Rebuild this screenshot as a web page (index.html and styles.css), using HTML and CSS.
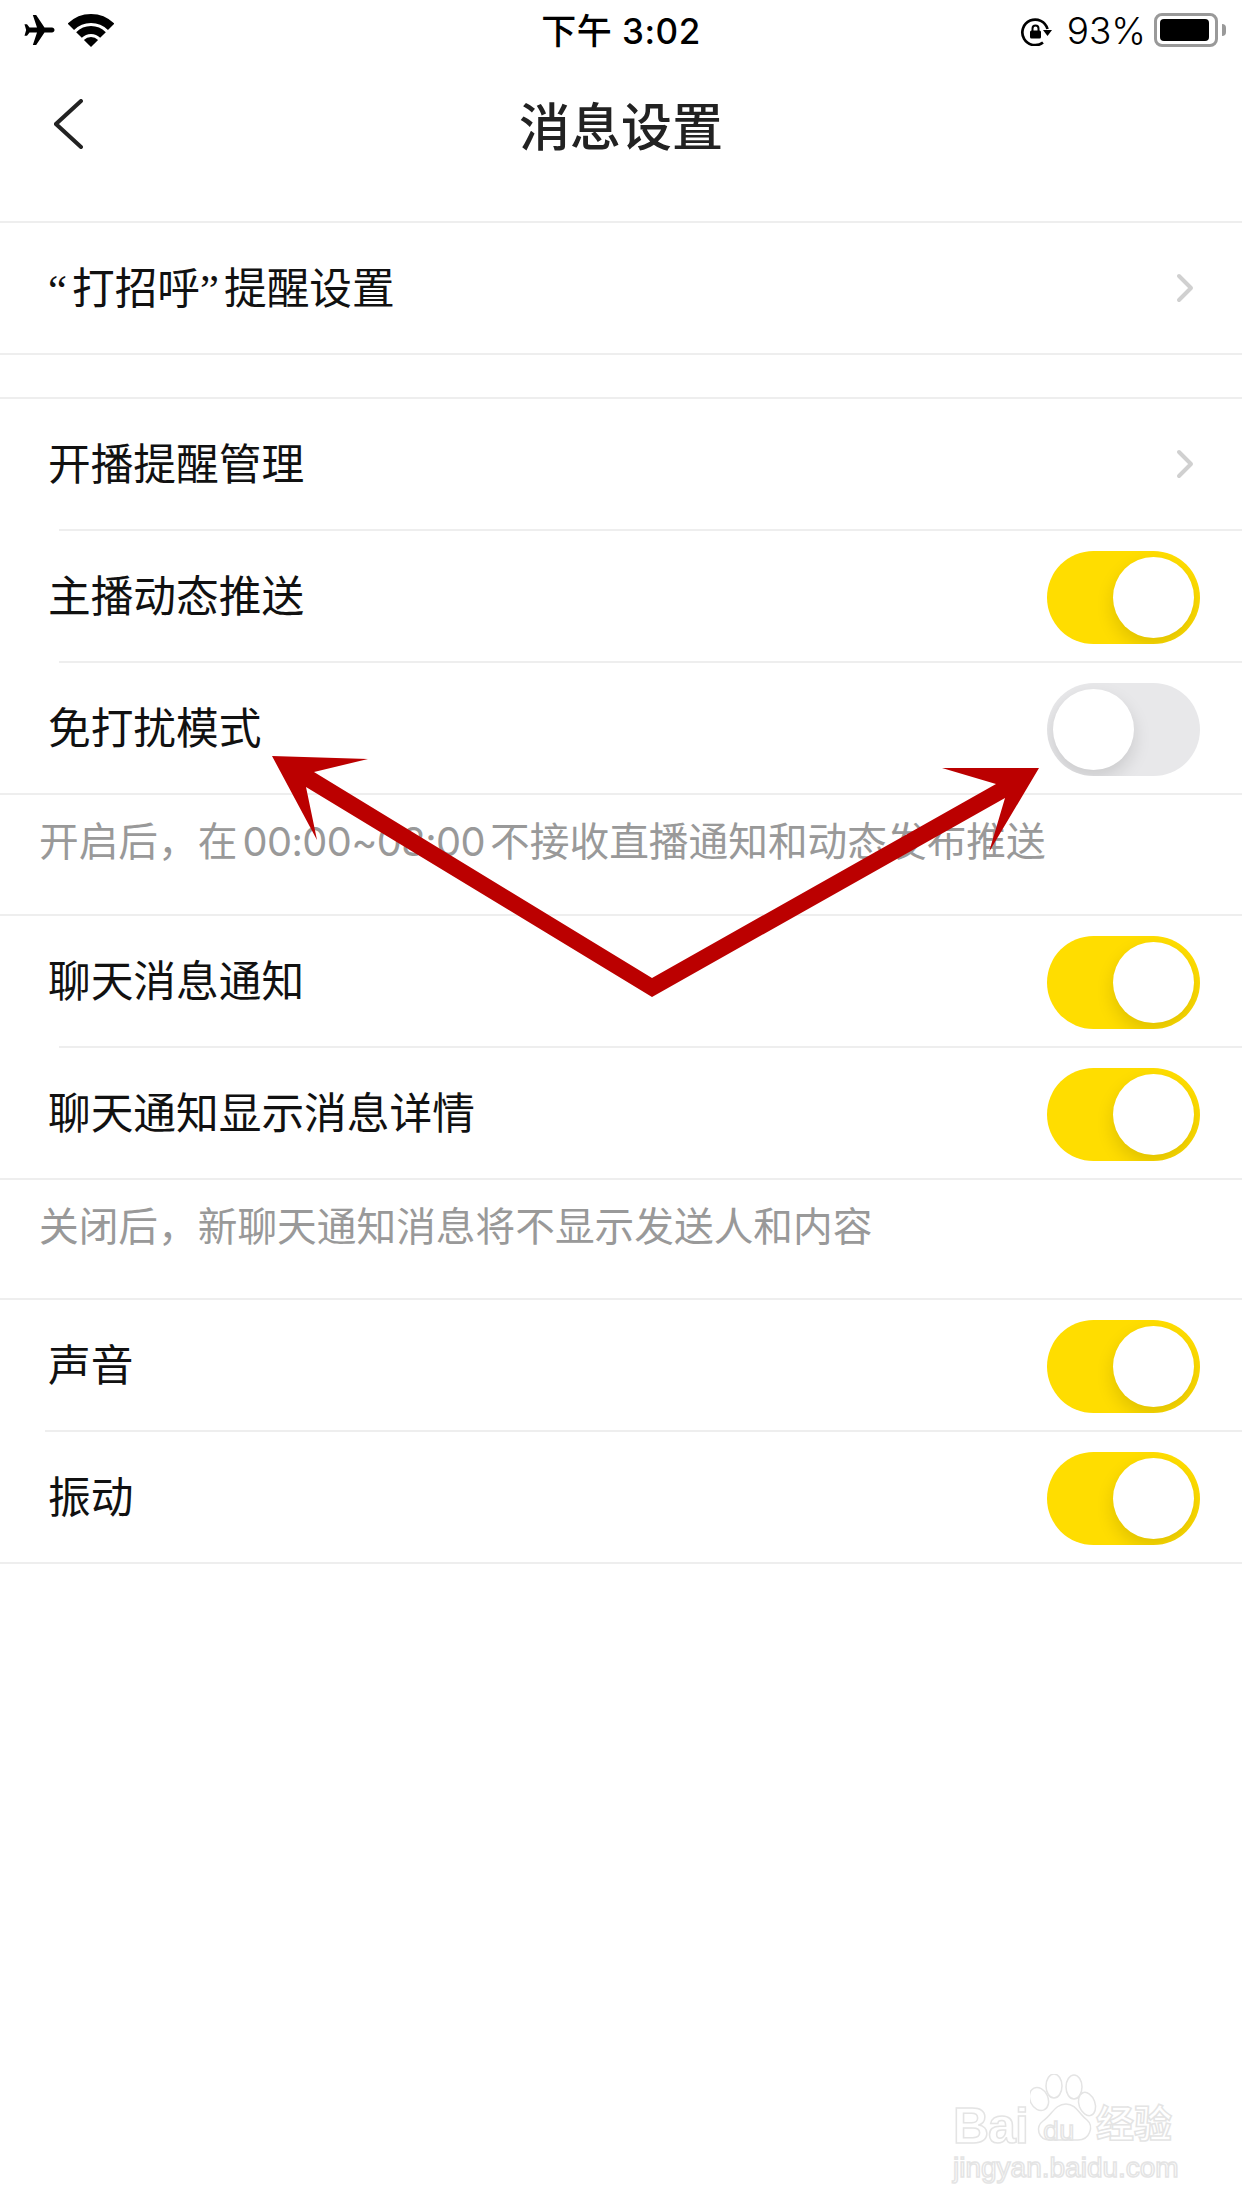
FILE: index.html
```html
<!DOCTYPE html>
<html lang="zh-CN">
  <head>
    <meta charset="UTF-8" />
    <title>消息设置</title>
    <link rel="stylesheet" href="styles.css">
  </head>
  <body>
    <div class="page">
      <div class="status">
        <div class="status-left">
          <svg class="plane" viewBox="3 3 18 18"><path d="M21 12c0-.8-.7-1.5-1.5-1.5H15L10 3H8l2.5 7.5H6L4.5 8.5H3L4 12l-1 3.5h1.5L6 13.5h4.5L8 21h2l5-7.5h4.5c.8 0 1.5-.7 1.5-1.5z"/></svg>
          <svg class="wifi" viewBox="0 0 46 33">
            <path class="wifi-band" stroke-width="9" d="M2.85 12.85A28.5 28.5 0 0 1 43.15 12.85"/>
            <path class="wifi-band" stroke-width="8" d="M11 21A17 17 0 0 1 35 21"/>
            <path d="M23 33L15.9 25.9A10 10 0 0 1 30.1 25.9Z"/>
          </svg>
        </div>
        <div class="clock">下午 3:02</div>
        <div class="status-right">
          <svg class="lock" viewBox="0 0 32 28">
            <path class="lock-ring" d="M23 24.500A12.800 12.800 0 1 1 27.500 11"/>
            <path d="M23 12h9l-4.500 6z"/>
            <path class="lock-ring lock-shackle" d="M12.500 13v-2.500a3 3 0 0 1 6 0V13"/>
            <rect x="10" y="12.500" width="11" height="8" rx="1.500"/>
          </svg>
          <span class="percent">93%</span>
          <div class="battery">
            <div class="battery-fill" style="width: 94%"></div>
          </div>
          <div class="battery-nub"></div>
        </div>
      </div>

      <div class="nav">
        <svg class="back" viewBox="0 0 29 50"><path d="M27 2L2 25l25 23"/></svg>
        <div class="nav-title">消息设置</div>
      </div>

      <div class="group group-first">
        <div class="row">
          <span class="row-label"><span class="quote">“</span>打招呼<span class="quote">”</span>提醒设置</span>
          <svg class="chevron" viewBox="0 0 18 30"><path d="M3 3l12 12L3 27"/></svg>
        </div>
      </div>

      <div class="group group-second">
        <div class="row">
          <span class="row-label">开播提醒管理</span>
          <svg class="chevron" viewBox="0 0 18 30"><path d="M3 3l12 12L3 27"/></svg>
        </div>
        <div class="sep"></div>
        <div class="row">
          <span class="row-label">主播动态推送</span>
          <div class="toggle on"><div class="knob"></div></div>
        </div>
        <div class="sep"></div>
        <div class="row">
          <span class="row-label">免打扰模式</span>
          <div class="toggle"><div class="knob"></div></div>
        </div>
      </div>
      <div class="note">开启后，在 <span class="num">00:00~08:00</span> 不接收直播通知和动态发布推送</div>

      <div class="group">
        <div class="row">
          <span class="row-label">聊天消息通知</span>
          <div class="toggle on"><div class="knob"></div></div>
        </div>
        <div class="sep"></div>
        <div class="row">
          <span class="row-label">聊天通知显示消息详情</span>
          <div class="toggle on"><div class="knob"></div></div>
        </div>
      </div>
      <div class="note note-short">关闭后，新聊天通知消息将不显示发送人和内容</div>

      <div class="group">
        <div class="row">
          <span class="row-label">声音</span>
          <div class="toggle on"><div class="knob"></div></div>
        </div>
        <div class="sep sep-wide"></div>
        <div class="row">
          <span class="row-label">振动</span>
          <div class="toggle on"><div class="knob"></div></div>
        </div>
      </div>

      <!-- red annotation drawn over the screenshot -->
      <svg class="arrows" viewBox="0 0 1242 2208">
        <path d="M272 756L368 759L314 772L652 978L996 784L942 768L1039 768L989 852L1005 798L652 997L306 787L317 840Z"/>
      </svg>

      <!-- baidu watermark -->
      <div class="watermark">
        <svg class="paw" viewBox="0 0 70 70">
          <ellipse cx="9" cy="25" rx="9" ry="12" transform="rotate(-25 9 25)"/>
          <ellipse cx="24" cy="12" rx="8" ry="12"/>
          <ellipse cx="44" cy="13" rx="8" ry="12"/>
          <ellipse cx="57" cy="30" rx="8" ry="12" transform="rotate(-20 57 30)"/>
          <path d="M36 30C46 30 49 40 57 46C64 52 60 66 48 66H20C8 66 5 53 13 47C22 41 25 30 36 30Z"/>
        </svg>
        <span class="wm-bai">Bai</span>
        <span class="wm-du">du</span>
        <span class="wm-cn">经验</span>
        <span class="wm-url">jingyan.baidu.com</span>
      </div>
    </div>
  </body>
</html>
```

FILE: styles.css
```css
body {
  margin: 0;
  background: #fff;
  font-family: Inter, "Noto Sans CJK SC", sans-serif;
  color: #111;
}
.page {
  position: relative;
  width: 1242px;
  height: 2208px;
  overflow: hidden;
}

/* status bar */
.status {
  height: 60px;
  display: grid;
  grid-template-columns: 1fr auto 1fr;
  align-items: center;
  color: #000;
}
.status-left {
  display: flex;
  align-items: center;
  gap: 13px;
  padding-left: 24px;
}
.plane {
  width: 31px;
  height: 30px;
}
.wifi {
  width: 46px;
  height: 33px;
}
.wifi-band {
  fill: none;
  stroke: #000;
}
.clock {
  font-size: 35px;
  font-weight: 500;
  letter-spacing: 0.5px;
  margin-bottom: 4px;
}
.status-right {
  display: flex;
  align-items: center;
  justify-content: flex-end;
  padding-right: 16px;
}
.lock {
  width: 32px;
  height: 28px;
  margin-right: 15px;
  margin-top: 4px;
}
.lock-ring {
  fill: none;
  stroke: #000;
  stroke-width: 2.700;
}
.lock-shackle {
  stroke-width: 2;
}
.percent {
  font-size: 37px;
  font-weight: 300;
  margin-right: 8px;
}
.battery {
  box-sizing: border-box;
  width: 64px;
  height: 34px;
  border: 3px solid #999;
  border-radius: 8px;
  padding: 3px;
}
.battery-fill {
  height: 100%;
  background: #000;
  border-radius: 4px;
}
.battery-nub {
  width: 4px;
  height: 12px;
  margin-left: 4px;
  background: #999;
  border-radius: 0 4px 4px 0;
}

/* nav */
.nav {
  height: 132px;
  display: flex;
  align-items: center;
  justify-content: center;
  position: relative;
}
.back {
  position: absolute;
  left: 54px;
  top: 39px;
  width: 29px;
  height: 50px;
  fill: none;
  stroke: #222;
  stroke-width: 4;
  stroke-linecap: round;
}
.nav-title {
  font-size: 51px;
  font-weight: 500;
  color: #222;
  margin-bottom: 5px;
}

/* rows */
.group {
  border-top: 2px solid #eee;
  border-bottom: 2px solid #eee;
}
.group-first {
  margin-top: 29px;
}
.group-second {
  margin-top: 42px;
}
.row {
  height: 130px;
  display: flex;
  align-items: center;
  justify-content: space-between;
  padding: 0 42px 0 48px;
}
.row-label {
  font-size: 42.700px;
  margin-bottom: 6px;
}
.quote {
  font-family: "Liberation Serif", serif;
  letter-spacing: 5px;
}
.sep {
  height: 2px;
  margin-left: 59px;
  background: #eee;
}
.sep-wide {
  margin-left: 45px;
}
.chevron {
  width: 18px;
  height: 30px;
  margin-right: 6px;
  fill: none;
  stroke: #d0d0d0;
  stroke-width: 4;
  stroke-linecap: round;
  stroke-linejoin: round;
}
.note {
  box-sizing: border-box;
  height: 119px;
  padding: 18px 0 0 39px;
  font-size: 39.700px;
  line-height: 58px;
  color: #999;
  word-spacing: -6px;
}
.note-short {
  height: 118px;
}
.num {
  letter-spacing: -0.600px;
}

/* switch */
.toggle {
  box-sizing: border-box;
  width: 153px;
  height: 93px;
  margin-top: 3px;
  padding: 6px;
  border-radius: 47px;
  background: #e8e8ea;
  overflow: hidden;
  display: flex;
}
.toggle.on {
  background: #ffdd00;
  justify-content: flex-end;
}
.knob {
  width: 81px;
  height: 81px;
  border-radius: 50%;
  background: #fff;
  box-shadow: 0 8px 18px rgba(0, 0, 0, 0.13);
}

/* overlays */
.arrows {
  position: absolute;
  left: 0;
  top: 0;
  width: 1242px;
  height: 2208px;
  fill: #bb0000;
}
.watermark {
  position: absolute;
  left: 950px;
  top: 2070px;
  width: 240px;
  height: 120px;
  color: #fff;
  -webkit-text-stroke: 1.500px #e4e4e4;
  font-family: "Liberation Sans", "Noto Sans CJK SC", sans-serif;
}
.watermark span {
  position: absolute;
  line-height: 1;
  white-space: nowrap;
}
.paw {
  position: absolute;
  left: 80px;
  top: 4px;
  width: 70px;
  height: 70px;
  fill: #fff;
  stroke: #e4e4e4;
  stroke-width: 1.500;
}
.wm-bai {
  left: 3px;
  top: 31px;
  font-size: 50px;
  font-weight: 700;
  letter-spacing: -1px;
}
.wm-du {
  left: 93px;
  top: 48px;
  font-family: Inter, sans-serif;
  font-size: 26px;
}
.wm-cn {
  left: 146px;
  top: 35px;
  font-size: 38px;
  font-weight: 700;
}
.wm-url {
  left: 3px;
  top: 84px;
  font-size: 28px;
}
```
